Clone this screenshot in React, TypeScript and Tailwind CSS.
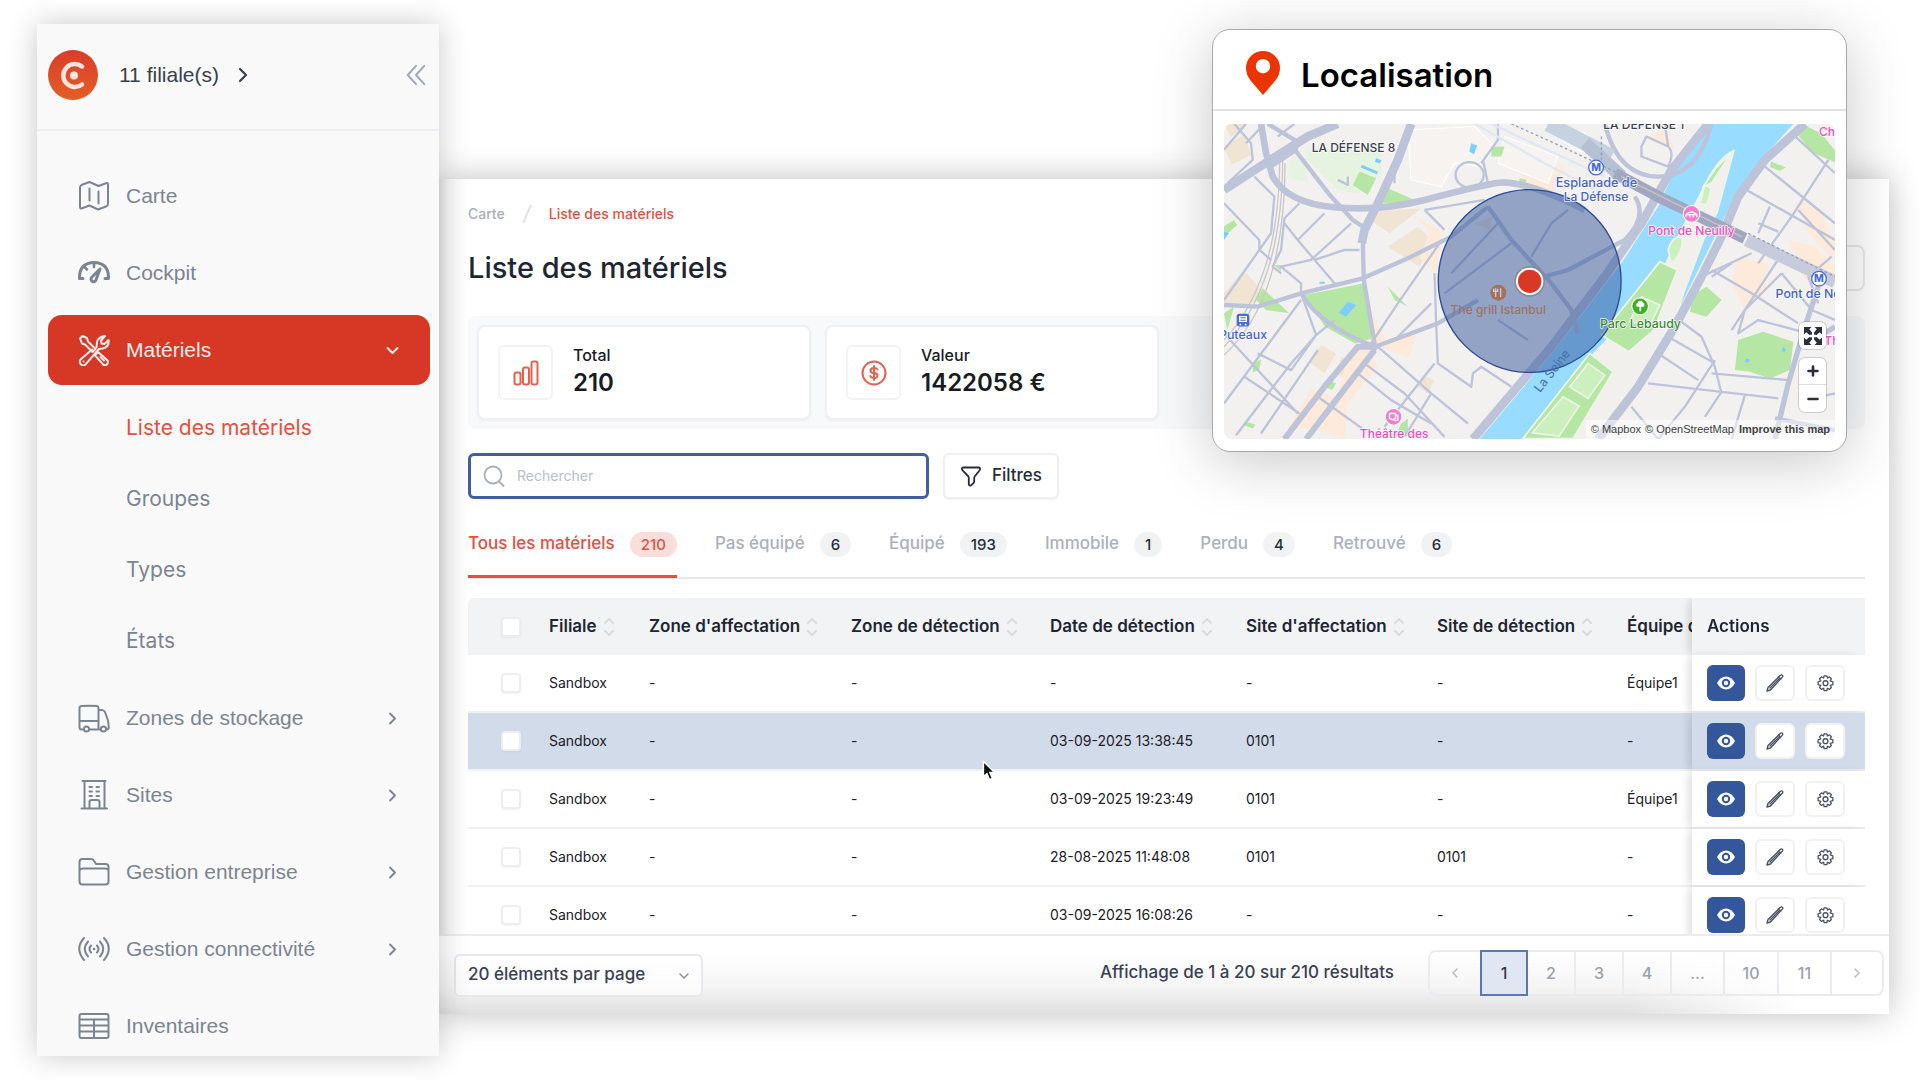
import type { ReactNode } from "react";

function Svg({ className, children, width = 2, box = "0 0 32 32" }: { className?: string; children: ReactNode; width?: number; box?: string }) {
  return (
    <svg aria-hidden="true" viewBox={box} fill="none" stroke="currentColor" strokeWidth={width} strokeLinecap="round" strokeLinejoin="round" className={className}>
      {children}
    </svg>
  );
}

const icons: Record<string, ReactNode> = {
  map: (
    <>
      <path d="M4 4.800Q2 5.500 2 7.500V27q0 2 2 1.200L11.500 25.500l8.500 4 8-3q2-.8 2-2.800V4.500q0-2-2-1.200L20.500 6 11.500 2z" />
      <path d="M11.500 8.500v12M20.500 11.500v12" />
    </>
  ),
  gauge: (
    <>
      <path d="M1.500 21.500Q1 6 16 5.500Q31 6 30.500 21.500H27M1.500 21.500H5" strokeWidth={3} />
      <path d="M16 6v4M6.500 10l2.500 2.500" strokeWidth={2.500} />
      <path d="M22 12l-8.500 8.500a2.600 2.600 0 1 0 4.500 2.500z" strokeWidth={3} />
    </>
  ),
  tools: (
    <>
      <path d="M2 4.500 4.500 2 9 4l1 3.500 7.500 7.500-3 3L7 10.500 4 9.500z" />
      <path d="M20 18l9 8a2.900 2.900 0 0 1-4.200 4.200l-8-9z" />
      <path d="M22.500 23l3.500 3.500" />
      <path d="M18.500 13.500 19 8q1-5 8-6l-4 4.500.5 3 3 .5L30.500 6q1 7-6 8.500l-3.500.5L7.800 30.200a3.400 3.400 0 0 1-5-5L14 15.500" />
      <path d="M5.500 27.500h.1" />
    </>
  ),
  truck: (
    <>
      <path d="M5 27.500H3.500Q1.500 27.500 1.500 25V6q0-1.800 2-2 8-.7 15.500 0 1.500.2 1.500 2v21.500M1.500 19h18.500M20.500 8h3q2.500 0 3.500 2l3 8.500.8 6.500q0 2.500-2 2.500H28M11.500 27.500h11" />
      <circle cx="8.500" cy="27" r="2.600" />
      <circle cx="25.500" cy="27" r="2.600" />
    </>
  ),
  building: (
    <>
      <path d="M4.500 2h23M3.500 29.500h25.500M6.500 2v27M26.500 2v27M11.500 29v-6q0-2 2-2h6q2 0 2 2v6" />
      <path d="M11.500 8h2.500M18.500 8H21M11.500 12.500h2.500M18.500 12.500H21M11.500 17h2.500M18.500 17H21" />
    </>
  ),
  folder: (
    <>
      <path d="M1.500 6q0-3 3-3H13q2 0 3 1.800L18 8h9.500q3 0 3 3v14.500q0 3-3 3h-23q-3 0-3-3z" />
      <path d="M2 13.500q.5-1 3-1h22q2.500 0 3 1" />
    </>
  ),
  signal: (
    <>
      <path d="M6 5Q-3.500 15.500 6 27M10 8.500Q3.500 16 10 23.500M13 12.500q-3 3.500 0 7" />
      <path d="M26 5q9.500 10.500 0 22M22 8.500q6.500 7.500 0 15M19 12.500q3 3.500 0 7" />
      <path d="M16 16h.1" strokeWidth={2.500} />
    </>
  ),
  table: (
    <>
      <rect x="1.500" y="4" width="29" height="24" rx="2" />
      <path d="M2 9.500h28M2 15.500h28M2 21.500h28M16 9.500V28" />
    </>
  ),
};

function Chevron({ dir, className }: { dir: "right" | "left" | "down"; className?: string }) {
  const d = dir === "right" ? "M8 4l8 8-8 8" : dir === "left" ? "M16 4l-8 8 8 8" : "M4 8l8 8 8-8";
  return (
    <Svg box="0 0 24 24" width={3} className={className}>
      <path d={d} />
    </Svg>
  );
}

function NavItem({ icon, label, chevron = true }: { icon: string; label: string; chevron?: boolean }) {
  return (
    <a href="#" className="flex h-[70px] shrink-0 items-center px-[30px] text-[#7d8491]">
      <Svg className="mr-4 size-8">{icons[icon]}</Svg>
      <span className="flex-1">{label}</span>
      {chevron && <Chevron dir="right" className="size-[15px]" />}
    </a>
  );
}

function Sidebar() {
  return (
    <aside className="flex h-[1032px] w-[402px] shrink-0 flex-col overflow-hidden bg-[#f9f9f9] font-['Liberation_Sans',sans-serif] text-[21px]">
      <div className="flex h-[107px] shrink-0 items-center border-b-2 border-[#ededf3] pr-3 pb-1 pl-[11px]">
        <svg aria-hidden="true" viewBox="0 0 50 50" className="size-[50px]">
          <defs>
            <linearGradient id="logo" x1="0" y1="0" x2="0" y2="1">
              <stop offset="0" stopColor="#d93c2b" />
              <stop offset="1" stopColor="#e45f26" />
            </linearGradient>
          </defs>
          <circle cx="25" cy="25" r="25" fill="url(#logo)" />
          <path d="M34 16.500a11.500 11.500 0 1 0 0 18" fill="none" stroke="#fbe3de" strokeWidth="4.500" strokeLinecap="round" />
          <circle cx="26" cy="25.500" r="4" fill="#fbe3de" />
        </svg>
        <a href="#" className="ml-[21px] flex items-center text-[#3a3f4a]">
          11 filiale(s)
          <Chevron dir="right" className="ml-[15px] size-[18px]" />
        </a>
        <button aria-label="Réduire le menu" className="ml-auto text-[#a3a9b8]">
          <Svg box="0 0 24 24" width={2.2} className="size-[22px]">
            <path d="M12 2 3 12l9 10M21 2l-9 10 9 10" />
          </Svg>
        </button>
      </div>
      <nav className="flex flex-col gap-[7px] pt-[30px] pr-[9px] pl-[11px]">
        <NavItem icon="map" label="Carte" chevron={false} />
        <NavItem icon="gauge" label="Cockpit" chevron={false} />
        <a href="#" className="flex h-[70px] shrink-0 items-center rounded-[14px] bg-[#d73725] px-[30px] text-[#fdeeeb]">
          <Svg className="mr-4 size-8">{icons.tools}</Svg>
          <span className="flex-1">Matériels</span>
          <Chevron dir="down" className="size-[15px]" />
        </a>
        <ul className="font-['Inter',sans-serif]">
          {["Liste des matériels", "Groupes", "Types", "États"].map((s, i) => (
            <li key={s}>
              <a href="#" className={"flex h-[71px] items-center pl-[78px] " + (i === 0 ? "text-[#e4503f]" : "text-[#7d8491]")}>
                {s}
              </a>
            </li>
          ))}
        </ul>
        <NavItem icon="truck" label="Zones de stockage" />
        <NavItem icon="building" label="Sites" />
        <NavItem icon="folder" label="Gestion entreprise" />
        <NavItem icon="signal" label="Gestion connectivité" />
        <NavItem icon="table" label="Inventaires" chevron={false} />
      </nav>
    </aside>
  );
}

function Stat({ label, value, children }: { label: string; value: string; children: ReactNode }) {
  return (
    <div className="flex h-[95px] w-[334px] items-center rounded-lg border-2 border-[#eff0f3] bg-white pl-[19px] shadow-xs">
      <div className="flex size-[55px] items-center justify-center rounded-md border-2 border-[#f3f3f6] text-[#e4604f]">{children}</div>
      <div className="ml-5 pb-2 text-[#171b24]">
        <div className="text-base leading-7 font-medium">{label}</div>
        <div className="text-2xl leading-7 font-semibold">{value}</div>
      </div>
    </div>
  );
}

const tabs: [string, string][] = [
  ["Tous les matériels", "210"],
  ["Pas équipé", "6"],
  ["Équipé", "193"],
  ["Immobile", "1"],
  ["Perdu", "4"],
  ["Retrouvé", "6"],
];

const columns: [string, string][] = [
  ["Filiale", "w-[100px]"],
  ["Zone d'affectation", "w-[202px]"],
  ["Zone de détection", "w-[199px]"],
  ["Date de détection", "w-[196px]"],
  ["Site d'affectation", "w-[191px]"],
  ["Site de détection", "w-[190px]"],
  ["Équipe d'affectation", "w-[220px]"],
];

const rows = [
  ["Sandbox", "-", "-", "-", "-", "-", "Équipe1"],
  ["Sandbox", "-", "-", "03-09-2025 13:38:45", "0101", "-", "-"],
  ["Sandbox", "-", "-", "03-09-2025 19:23:49", "0101", "-", "Équipe1"],
  ["Sandbox", "-", "-", "28-08-2025 11:48:08", "0101", "0101", "-"],
  ["Sandbox", "-", "-", "03-09-2025 16:08:26", "-", "-", "-"],
];

function Check({ label }: { label: string }) {
  return <input type="checkbox" aria-label={label} className="ml-[33px] block size-5 appearance-none rounded-sm border-2 border-[#eeeef1] bg-white shadow-xs" />;
}

const actionButton = "flex h-9 w-10 items-center justify-center rounded-md border-2 border-[#f1f1f4] bg-white text-[#4b5261]";

function Actions() {
  return (
    <div className="flex items-center gap-[10px]">
      <button aria-label="Voir" className="flex h-9 w-[38px] items-center justify-center rounded-md bg-[#34569b]">
        <svg aria-hidden="true" viewBox="0 0 18 14" className="h-[14px] w-[18px]">
          <path d="M0 7Q3.500.5 9 .5T18 7q-3.500 6.500-9 6.500T0 7z" fill="#fff" />
          <circle cx="9" cy="7" r="3.200" fill="#fff" stroke="#34569b" strokeWidth="2" />
        </svg>
      </button>
      <button aria-label="Modifier" className={actionButton}>
        <Svg box="0 0 18 18" width={1.4} className="size-[18px]">
          <path d="M1 17l1-3.500L14.500 1.200q1-.7 1.800.1t.1 1.800L4.500 16z" />
          <path d="M4 14 13 5M12.500 3l2 2" />
        </Svg>
      </button>
      <button aria-label="Paramètres" className={actionButton}>
        <Svg box="0 0 18 18" width={1.4} className="size-[17px]">
          <path d="M7.500 1h3l.5 2.200 2.200-1.200 2 2L14 6.200l2.800 1v3l-2.800.8 1.200 2.200-2 2L11 14l-.5 2.500h-3L7 14l-2.300 1.200-2-2L4 11l-2.800-.8v-3L4 6.200 2.700 4l2-2L7 3.200z" />
          <circle cx="9" cy="8.700" r="2.600" />
        </Svg>
      </button>
    </div>
  );
}

function DataTable() {
  return (
    <div className="h-[336px] overflow-hidden rounded-tl-md">
      <table className="w-[1537px] table-fixed border-separate border-spacing-0 text-left">
        <thead>
          <tr className="h-[57px] bg-[#f2f3f5] text-[17px] text-[#1f2633]">
            <th className="w-[66px]">
              <Check label="Tout sélectionner" />
            </th>
            {columns.map(([name, w]) => (
              <th key={name} className={"pl-[15px] font-semibold whitespace-nowrap " + w}>
                <span className="flex items-center">
                  {name}
                  <Svg box="0 0 12 20" width={2} className="ml-[6px] h-5 w-3 text-[#d8dae0]">
                    <path d="M2 6l4-4 4 4M2 14l4 4 4-4" />
                  </Svg>
                </span>
              </th>
            ))}
            <th className="sticky right-0 w-[173px] bg-[#f2f3f5] pl-[15px] font-semibold shadow-[-6px_0_8px_-2px_rgba(0,0,0,0.12)]">Actions</th>
          </tr>
        </thead>
        <tbody className="text-sm text-[#1d2027]">
          {rows.map((r, i) => (
            <tr key={i} className={"h-[58px] " + (i === 1 ? "bg-[#d2dbea]" : "bg-white")}>
              <td className="border-b-2 border-[#f1f1f3]">
                <Check label={"Sélectionner la ligne " + (i + 1)} />
              </td>
              {r.map((c, j) => (
                <td key={j} className="border-b-2 border-[#f1f1f3] pl-[15px] whitespace-nowrap">
                  {c}
                </td>
              ))}
              <td className={"sticky right-0 border-b-2 border-[#eaeaee] pl-[15px] shadow-[-6px_0_8px_-2px_rgba(0,0,0,0.12)] " + (i === 1 ? "bg-[#d2dbea]" : "bg-white")}>
                <Actions />
              </td>
            </tr>
          ))}
        </tbody>
      </table>
    </div>
  );
}

function Footer() {
  const pages: [string, string][] = [
    ["1", "w-12"],
    ["2", "w-12"],
    ["3", "w-12"],
    ["4", "w-12"],
    ["...", "w-[53px]"],
    ["10", "w-[54px]"],
    ["11", "w-[53px]"],
  ];
  return (
    <footer className="flex h-20 items-center border-t-2 border-[#ebebed] bg-[linear-gradient(to_right,transparent_82%,white_94%),linear-gradient(to_bottom,white_20%,#f5f5f5_65%,#e0e0e0)] pr-[5px] pb-1 pl-[15px]">
      <div className="relative mt-1">
        <select aria-label="Éléments par page" className="h-[43px] w-[249px] appearance-none rounded-md border-2 border-[#e8e8ec] bg-white/60 pl-3 text-[17px] font-medium text-[#3a4152]">
          <option>20 éléments par page</option>
        </select>
        <Chevron dir="down" className="pointer-events-none absolute top-4 right-[13px] size-3 text-[#8b90a0]" />
      </div>
      <p className="mr-[34px] ml-auto text-[17px] font-medium text-[#3a4152]">Affichage de 1 à 20 sur 210 résultats</p>
      <nav aria-label="Pagination" className="flex h-[46px] rounded-lg border-2 border-[#ebebef] text-base font-medium text-[#9ba1b0]">
        <button aria-label="Précédent" className="flex w-[50px] items-center justify-center text-[#b8bcc8]">
          <Chevron dir="left" className="size-3" />
        </button>
        {pages.map(([p, w], i) => (
          <button key={p} className={w + (i === 0 ? " -my-[2px] border-2 border-[#5b76b3] bg-[#e1e7f2] text-[#2f3a52]" : " border-r-2 border-[#ebebef]")}>
            {p}
          </button>
        ))}
        <button aria-label="Suivant" className="flex w-[50px] items-center justify-center text-[#b8bcc8]">
          <Chevron dir="right" className="size-3" />
        </button>
      </nav>
    </footer>
  );
}

function MainPanel() {
  return (
    <main className="z-10 mt-[155px] mr-[31px] flex min-w-0 flex-1 flex-col bg-[linear-gradient(to_right,#e6e6e6,#f7f7f7_10px,white_28px)] shadow-[0_0_32px_rgba(0,0,0,0.26)]">
      <div className="pt-[23px] pr-6 pl-[29px]">
        <nav aria-label="Fil d'Ariane" className="flex h-6 items-center text-sm font-medium">
          <a href="#" className="text-[#a9aebb]">Carte</a>
          <svg aria-hidden="true" viewBox="0 0 10 20" className="mx-[17px] h-5 w-[10px]">
            <path d="M1 19 9 1" stroke="#e2e3e8" strokeWidth="2" />
          </svg>
          <a href="#" className="text-[#e4503f]">Liste des matériels</a>
        </nav>
        <div className="mt-[19px] flex h-[46px] items-center justify-between">
          <h1 className="text-[29px] font-medium text-[#1f2633]">Liste des matériels</h1>
          <button aria-label="Exporter" className="h-[46px] w-[140px] rounded-lg border-2 border-[#e9e9ec]" />
        </div>
        <section className="mt-[25px] flex gap-[14px] rounded-lg bg-[#f8f9fb] p-[9px]">
          <Stat label="Total" value="210">
            <Svg box="0 0 26 26" width={2} className="size-[26px]">
              <rect x="1.500" y="12.500" width="6" height="12" rx="2" />
              <rect x="10" y="7.500" width="6" height="17" rx="2" />
              <rect x="18.500" y="1.500" width="6" height="23" rx="2" />
            </Svg>
          </Stat>
          <Stat label="Valeur" value="1422058 €">
            <Svg box="0 0 26 26" width={2} className="size-[26px]">
              <circle cx="13" cy="13" r="11.500" />
              <path d="M16.500 9.500Q15.500 8 13 8q-3.500 0-3.500 2.500T13 13q3.500.3 3.500 2.700T13 18q-3 0-3.700-2M13 6v14" />
            </Svg>
          </Stat>
        </section>
        <div className="mt-6 flex gap-[14px]">
          <label className="flex h-[46px] w-[461px] items-center rounded-md border-[3px] border-[#4160a2] bg-white pl-3">
            <Svg box="0 0 22 22" width={1.8} className="size-[22px] text-[#abb0bd]">
              <circle cx="10" cy="10" r="8.500" />
              <path d="M16 16.500l4.500 4.500" />
            </Svg>
            <input type="search" aria-label="Rechercher" placeholder="Rechercher" className="ml-3 flex-1 bg-transparent text-sm outline-none placeholder:text-[#babec9]" />
          </label>
          <button className="flex h-[46px] items-center rounded-md border-2 border-[#f0f0f3] bg-white px-[15px] text-[17px] font-medium text-[#262c38] shadow-xs">
            <Svg box="0 0 22 22" width={1.8} className="mr-[10px] size-[22px]">
              <path d="M3.500 2.500h15q2 .3 1.500 2-.3 1-5 6.500-.8 1-.8 2v3.500q0 1-1 1.800l-2.200 2Q9 21 8.800 19.500V13q0-1-.8-2Q3 6 2 4.500q-.5-1.700 1.500-2z" />
            </Svg>
            Filtres
          </button>
        </div>
        <div role="tablist" className="mt-5 flex h-15 gap-[38px] border-b-2 border-[#e7e8eb]">
          {tabs.map(([t, n], i) => (
            <button
              key={t}
              role="tab"
              aria-selected={i === 0}
              className={"flex h-[59px] items-center gap-[15px] border-b-[3px] pb-[6px] text-[17px] font-medium " + (i === 0 ? "border-[#e4503f] text-[#e4503f]" : "border-transparent text-[#abb0bd]")}
            >
              {t}
              <span className={"rounded-full px-[11px] text-[15px] leading-[25px] " + (i === 0 ? "bg-[#fbdedb]" : "bg-[#f1f2f4] text-[#262c38]")}>{n}</span>
            </button>
          ))}
        </div>
        <div className="mt-[19px]">
          <DataTable />
        </div>
      </div>
      <Footer />
    </main>
  );
}

function Label({ x, y, fill, children, size = 38, anchor = "middle" }: { x: number; y: number; fill: string; children: string; size?: number; anchor?: "middle" | "start" | "end" }) {
  return (
    <text x={x} y={y} fill={fill} fontSize={size} textAnchor={anchor} fontWeight="500" stroke="#fff" strokeOpacity="0.85" strokeWidth="5" paintOrder="stroke" strokeLinejoin="round">
      {children}
    </text>
  );
}

/* One map unit is a third of a pixel. */
function MapDrawing() {
  return (
    <svg role="img" aria-label="Plan du quartier" viewBox="99 342 1831 945" preserveAspectRatio="xMidYMid slice" className="block h-[315px] w-full" fontFamily="Inter, sans-serif">
      <rect x="99" y="342" width="1831" height="945" fill="#f3f0f0" />

      <g fill="#efe5d2">
        <path d="M99 342h70l-50 40zM99 410l60-35 22 60-60 30zM99 850l60-70 50 60-20 40-90 10zM545 605l145-10-95 75-60-40zM620 690l60-40 45 45-40 75-95-60zM390 1005l45 25-35 60-45-35zM450 1040l45 20-30 45-30-20zM700 1100l30 10-20 40-30-20zM850 640l55-20-10 40z" />
      </g>
      <g fill="#feeadb">
        <path d="M670 620l85 45-20 120-50-40 30-80zM990 450l90 20v80l-80-10zM545 920l40 70 90-30-20 80-100-30-50-10zM470 1030l60-20 30 60-90 110-10 105-90-30-80 0 70-120 80 30zM1020 430l100 40-30 80-70-10zM1370 380l50-20 30 60-50-20zM1830 560l60 50 40 90v60l-80-90-30-80zM1640 740l90 20-10 90-60 50-40-80zM1790 690l80 20 60 60v60l-90-20z" />
      </g>
      <g fill="#f6f3f1" stroke="#fff" strokeWidth="3">
        <path d="M650 360l200-10 60 60-40 60-80-10-40 70-90-20zM940 380l160 60-30 80-150-60zM1060 350l120 20 60 70-90-20z" />
      </g>
      <g fill="#e6f3e0">
        <path d="M340 420l230-20 0 90-70 60-60-10-90-90zM300 440l40 20 10 60-60-20z" />
      </g>
      <g fill="#b5e6a3">
        <path d="M505 485l50 20-25 50-45-30zM565 580l25-45 80 35-30 12zM340 855l180-35 22 165-50 15-90-50zM215 835l80 75-70-10-30-30zM99 650l30-20 10 15-40 35zM99 910l30-20-20 70zM185 1060l25-12-5 30-20 10zM165 1235l28 8-8 12-22-8zM410 1110l25 10-12 20-18-8zM590 830l60 60-40-20zM630 1240l20-15v50l-40 8zM900 410l40 0-10 30-30 0zM250 765h20v20zM985 505l20 5-3 15-20-4z" />
        <path d="M1830 342l60 30 40 50v35l-70-30-40-50zM1738 455l45 18-20 10-28-12zM1545 830l45 40-45 50-50-15 10-50zM1640 990l75-25 90 30-10 85-60 25-60-20-45-5z" />
      </g>

      <path d="M865 1287 1090 1020 1290 760 1400 590 1470 440 1560 342H1805L1700 460 1620 580 1560 700 1460 900 1380 1050 1210 1287Z" fill="#98dcff" />
      <g stroke="#eef4e8" strokeWidth="5">
        <path d="M1627 422q-50 20-100 130-70 130-90 180l-60 120-180 190-145 245h160l145-200 80-110 40-130 60-160 40-80z" fill="#f2f0ed" />
        <path d="M1620 428l-48 48-40 60 30-20z" fill="#b5e6a3" />
        <path d="M1405 755l52 25-70 180-75 65-82-50z" fill="#b5e6a3" />
        <path d="M1195 1030l70 55-120 200h-150z" fill="#b5e6a3" />
        <path d="M1190 1060l50 35-50 70-55-35zM1115 1160l48 28-60 90-80-10zM1430 720q10-40 40-40 10 40-30 80zM1540 525l20 10-15 50-20-5zM1350 860l55 25-30 60-60-10z" fill="#cbf0bd" />
      </g>

      <g fill="none" stroke="#c9c8c8" strokeWidth="4">
        <path d="M275 440q0 200-45 340T99 1010M266 440q0 200-45 335T99 990M282 460q0 200-45 345T99 1035" />
      </g>

      <g fill="none" stroke="#bdc3d9" strokeLinejoin="round">
        <g strokeWidth="26">
          <path d="M99 540 230 455 350 380 440 342" />
          <path d="M210 342 225 430 245 500Q290 580 430 592T700 570T910 520T1180 600" strokeWidth="20" />
          <path d="M660 342 620 450 560 580 520 660 512 700" />
          <path d="M845 1287 1080 1010 1240 800 1350 640 1440 480 1550 342" />
          <path d="M1840 342 1720 450 1640 560 1590 680 1530 800 1450 950 1340 1130 1220 1287" />
          <path d="M1930 950 1850 1000M1880 830 1840 950 1790 1120 1750 1287" strokeWidth="16" />
          <path d="M280 1287 400 1130 500 1010 552 1010M345 1287 550 1020" strokeWidth="18" />
        </g>
        <g strokeWidth="13">
          <path d="M230 342 310 390 315 425 420 560 485 630 515 650M240 470 315 420M99 885 200 890 330 850 515 805 650 745 780 680 890 590M515 700 518 810 552 1010M330 850Q390 950 552 1010M552 1010 740 940 860 870M890 590 960 690 1080 820 1140 900 1160 970" />
          <path d="M1240 342Q1280 500 1400 500T1560 342M1330 560Q1370 620 1300 690L1130 780 1060 800M1750 1225 1930 1260" />
        </g>
        <g strokeWidth="7">
          <path d="M99 580 205 690V720L240 750M190 500 250 560 240 670 99 870M280 640 320 690 430 820M480 640 360 750 270 770 330 820V850M245 770 270 790M505 720H460L370 750M320 690 400 610M325 580 280 625 270 720 245 770M99 1180 330 870M135 1275 300 1060 375 975M99 970 320 1210M160 1100 325 1210M330 850 375 975 430 930M210 1270 380 1020M375 975 300 1080 200 1030M130 342 180 400 185 450 110 520" />
          <path d="M700 600 760 660M745 700 620 880 540 1000M730 790 735 950 740 1060 840 1130 845 1090 870 1070 960 1130M620 980 720 880M730 1060 580 1250M500 1090 600 1170 720 1240M380 1160 520 1260M420 1180 560 1010 720 1150 830 1240M720 1150 640 1280M520 1060 640 1150 760 1280M700 600 760 590 880 570M780 790 920 640M760 850 960 700M920 930 1010 990M1020 740 1080 640 1130 600" />
          <ellipse cx="835" cy="495" rx="42" ry="38" />
          <path d="M870 460 920 390V342M875 450 890 520M99 420 165 342M610 460V520M310 342 260 380M165 400 220 342M440 510l30 15 0-25" />
          <path d="M1350 410 1365 380 1430 410Q1450 430 1430 470L1350 440zM1430 410 1420 342M1720 470 1930 640M1800 370 1930 490M1910 450 1800 620 1700 760M1665 540 1930 690M1820 600 1930 720M1735 590 1700 670M1700 640 1760 665M1765 740 1620 960M1770 790 1660 900 1640 970 1700 930 1850 970M1560 780 1680 850 1820 940M1530 800 1680 730M1620 760 1560 800M1770 790 1860 900 1930 930M1450 920 1530 980 1570 1070 1590 1150M1430 980 1570 1060M1400 1030 1520 1110M1570 1050 1480 1190 1400 1287M1370 1120 1590 1145 1760 1165M1560 1090 1790 1110M1660 1155 1620 1287M1590 1145 1540 1220M1880 880 1850 800 1920 740M1880 1160 1930 1150M1320 1190 1400 1287" />
        </g>
        <path d="M1070 342 1260 440" stroke="#c6d2e0" strokeWidth="46" />
        <path d="M1180 400 1290 500" stroke="#b5c1d3" strokeWidth="40" />
        <path d="M1270 490 1400 560 1660 685" stroke="#a1a7c0" strokeWidth="34" />
        <path d="M1665 690 1930 815" stroke="#c7cbdc" strokeWidth="38" />
        <path d="M960 342 1100 405 1280 490M1230 380V450M1670 670 1930 800" stroke="#8fa0ba" strokeWidth="4" strokeDasharray="8 8" />
        <path d="M1290 500 1400 555 1650 680" stroke="#c5c4ca" strokeWidth="4" />
        <path d="M850 342 1060 460 1250 560M900 342 1240 500" stroke="#dfe8f2" strokeWidth="7" />
      </g>
      <g fill="#7fcdfb">
        <path d="M470 875l25 10-30 35-22-12zM512 465l48 20-3 8-48-20zM555 445l16 6-5 10-15-5zM840 400l18 8-10 25-14-8zM99 665l15 5-15 20zM385 815h16v6h-16zM1665 1045l12 5-8 8-10-4zM1775 1010l8 8-5 10-8-6z" />
      </g>

      <circle cx="1015" cy="813" r="274" fill="#34569b" fillOpacity="0.5" stroke="#2b4b92" strokeWidth="4" />
      <circle cx="1015" cy="814" r="46" fill="#8d8a8e" />
      <circle cx="1015" cy="814" r="41" fill="#fff" />
      <circle cx="1015" cy="814" r="35" fill="#d93826" />

      <Label x={487} y={427} fill="#3c4150" size={36}>LA DÉFENSE 8</Label>
      <Label x={1357} y={358} fill="#3c4150" size={36}>LA DÉFENSE 1</Label>
      <Label x={1215} y={531} fill="#3f63cf" size={38}>Esplanade de</Label>
      <Label x={1214} y={573} fill="#3f63cf" size={36}>La Défense</Label>
      <Label x={228} y={986} fill="#3f63cf" anchor="end" size={37}>Puteaux</Label>
      <text x={1092} y={1090} transform="rotate(-52 1092 1090)" textAnchor="middle" fontSize="37" fill="#466fa8">La Seine</text>
      <text x={921} y={912} textAnchor="middle" fontSize="36" fontWeight="500" fill="#9c7468">The grill Istanbul</text>
      <Label x={1347} y={954} fill="#3b8a35" size={37}>Parc Lebaudy</Label>
      <circle cx="921" cy="848" r="24" fill="#a2745f" />
      <path d="M913 835v26M928 835v26M907 836v8h12v-8" stroke="#c9cbd8" strokeWidth="4" fill="none" />

      <Label x={1500} y={676} fill="#ee4fb8" size={36}>Pont de Neuilly</Label>
      <Label x={1752} y={865} fill="#3f63cf" anchor="start" size={37}>Pont de Neuilly</Label>
      <Label x={609} y={1284} fill="#ee4fb8" size={36}>Théâtre des</Label>
      <Label x={1882} y={378} fill="#ee4fb8" anchor="start" size={36}>Ch</Label>
      <Label x={1898} y={1004} fill="#ee4fb8" anchor="start" size={36}>Th</Label>
      <circle cx="1500" cy="612" r="25" fill="#f57ccb" stroke="#fff" strokeWidth="3" />
      <path d="M1484 622v-8q16-16 32 0v8M1484 614h32M1495 614v8M1505 614v8" stroke="#fff" strokeWidth="4" fill="none" />
      <circle cx="607" cy="1220" r="25" fill="#f57ccb" stroke="#fff" strokeWidth="3" />
      <path d="M595 1210h18v14q-9 8-18 0zM606 1226q2 8 14 4v-14h-6" stroke="#fff" strokeWidth="4" fill="none" />
      <circle cx="1346" cy="889" r="25" fill="#3fae29" stroke="#fff" strokeWidth="3" />
      <path d="M1344 890v14h5v-14h8a8 8 0 0 0-2-12 9 9 0 0 0-17 0 8 8 0 0 0-2 12z" fill="#fff" />
      <rect x="137" y="911" width="38" height="38" rx="8" fill="#4a6be0" />
      <path d="M146 920h20v14h-20zM146 927h20M150 942l-4 4M162 942l4 4" stroke="#fff" strokeWidth="4" fill="none" />
      {[
        [1214, 473],
        [1882, 806],
      ].map(([x, y]) => (
        <g key={x}>
          <circle cx={x} cy={y} r="22" fill="#fff" stroke="#4a6be0" strokeWidth="4" />
          <text x={x} y={y + 11} textAnchor="middle" fontSize="31" fontWeight="800" fill="#4a6be0">M</text>
        </g>
      ))}
    </svg>
  );
}

function LocationCard() {
  return (
    <section className="absolute top-[29px] right-[73px] z-30 w-[635px] rounded-[18px] border border-[#a9a9a9] bg-white shadow-[0_10px_60px_rgba(0,0,0,0.22)]">
      <header className="flex h-[81px] items-center border-b-2 border-[#e2e2e2] pl-[33px]">
        <svg aria-hidden="true" viewBox="0 0 34 44" className="mt-[6px] h-11 w-[34px]">
          <path d="M17 0A17 17 0 0 0 0 17q0 7 5 13l12 14 12-14q5-6 5-13A17 17 0 0 0 17 0zm0 8a7.200 7.200 0 1 1 0 14.400A7.200 7.200 0 0 1 17 8z" fill="#ea3500" />
        </svg>
        <h2 className="mt-[10px] ml-[21px] text-[33px] leading-10 font-semibold text-black">Localisation</h2>
      </header>
      <div className="relative mx-[11px] mt-[13px] mb-3 overflow-hidden rounded-lg">
        <MapDrawing />
        <div className="absolute right-[9px] bottom-[27px] flex flex-col gap-[9px] text-[#2d3039]">
          <button aria-label="Plein écran" className="flex size-[27px] items-center justify-center rounded-md bg-white shadow-[0_0_0_1px_rgba(0,0,0,0.15)]">
            <svg aria-hidden="true" viewBox="0 0 18 18" className="size-[18px]" fill="currentColor">
              <path d="M0 0h7.500L5.200 2.300 8 5.500v2L5.500 8 2.300 5.200 0 7.500zM18 0h-7.500l2.300 2.300L10 5.500v2l2.500.5 3.200-2.800L18 7.500zM0 18h7.500l-2.300-2.300L8 12.500v-2l-2.500-.5-3.200 2.800L0 10.500zM18 18h-7.500l2.300-2.300-2.800-3.200v-2l2.500-.5 3.200 2.800 2.300-2.300z" />
            </svg>
          </button>
          <div className="flex flex-col rounded-md bg-white shadow-[0_0_0_1px_rgba(0,0,0,0.15)]">
            <button aria-label="Zoomer" className="flex size-[27px] items-center justify-center border-b border-[#dddddd]">
              <Svg box="0 0 12 12" width={2.6} className="size-3">
                <path d="M6 1.500v9M1.500 6h9" />
              </Svg>
            </button>
            <button aria-label="Dézoomer" className="flex size-[27px] items-center justify-center">
              <Svg box="0 0 12 12" width={2.6} className="size-3">
                <path d="M1.500 6h9" />
              </Svg>
            </button>
          </div>
        </div>
        <div className="absolute right-0 bottom-0 flex h-[19px] items-center gap-1 bg-white/50 px-[5px] font-['Liberation_Sans',sans-serif] text-[11px] text-[#404040]">
          <a href="#">© Mapbox</a>
          <a href="#">© OpenStreetMap</a>
          <a href="#" className="ml-px font-bold">Improve this map</a>
        </div>
      </div>
    </section>
  );
}

export default function App() {
  return (
    <div className="relative min-h-screen overflow-hidden bg-white font-['Inter',sans-serif]">
      <div className="flex items-start pt-6 pl-[37px]">
        <div className="z-20 shadow-[0_0_28px_rgba(0,0,0,0.22)]">
          <Sidebar />
        </div>
        <MainPanel />
      </div>
      <LocationCard />
      <svg aria-hidden="true" viewBox="0 0 14 21" className="absolute top-[760px] left-[982px] z-40 h-[21px] w-[14px]">
        <path d="M1.500 1.500v15l3.500-3 2.500 6 2.800-1.200L7.800 12.500h4.700z" fill="#111" stroke="#fff" strokeWidth="1.300" />
      </svg>
    </div>
  );
}
